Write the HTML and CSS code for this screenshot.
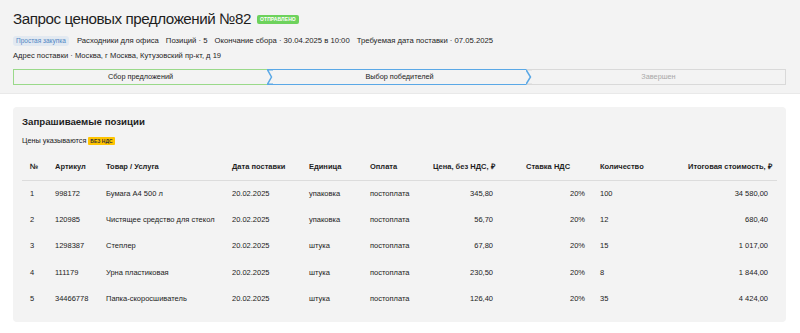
FILE: index.html
```html
<!DOCTYPE html>
<html lang="ru">
<head>
<meta charset="utf-8">
<title>Запрос ценовых предложений №82</title>
<link rel="stylesheet" href="styles.css">
</head>
<body>
<header class="head">
  <div class="title-row">
    <h1 class="title">Запрос ценовых предложений №82</h1>
    <span class="status">ОТПРАВЛЕНО</span>
  </div>
  <div class="meta-row">
    <span class="tag">Простая закупка</span>
    <span class="meta">Расходники для офиса</span>
    <span class="meta">Позиций · 5</span>
    <span class="meta">Окончание сбора · 30.04.2025 в 10:00</span>
    <span class="meta">Требуемая дата поставки · 07.05.2025</span>
  </div>
  <div class="addr-row">Адрес поставки · Москва, г Москва, Кутузовский пр-кт, д 19</div>
  <div class="stepper">
    <div class="step step-done">Сбор предложений</div>
    <svg class="chev" width="6" height="16" viewBox="0 0 6 16"><path d="M0 0.75H6M0 15.25H6M0.5 0.75L4.5 8L0.5 15.25" fill="none" stroke="#5aa8e6" stroke-width="1.5"/></svg>
    <div class="step step-active">Выбор победителей</div>
    <svg class="chev" width="6" height="16" viewBox="0 0 6 16"><path d="M0 0.75H6M0 15.25H6" fill="none" stroke="#d9d9d9" stroke-width="1.5"/><path d="M0 0.75L4.5 8L0 15.25" fill="none" stroke="#5aa8e6" stroke-width="1.5"/></svg>
    <div class="step step-todo">Завершен</div>
  </div>
</header>

<section class="card">
  <h2 class="card-title">Запрашиваемые позиции</h2>
  <div class="note">Цены указываются <span class="vat">БЕЗ НДС</span></div>
  <table class="items">
    <colgroup>
      <col class="c1"><col class="c2"><col class="c3"><col class="c4"><col class="c5">
      <col class="c6"><col class="c7"><col class="c8"><col class="c9"><col class="c10">
    </colgroup>
    <thead>
      <tr>
        <th class="num">№</th>
        <th>Артикул</th>
        <th>Товар / Услуга</th>
        <th>Дата поставки</th>
        <th>Единица</th>
        <th>Оплата</th>
        <th class="price">Цена, без НДС, ₽</th>
        <th class="rate">Ставка НДС</th>
        <th>Количество</th>
        <th class="total">Итоговая стоимость, ₽</th>
      </tr>
    </thead>
    <tbody>
      <tr><td class="num">1</td><td>998172</td><td>Бумага А4 500 л</td><td>20.02.2025</td><td>упаковка</td><td>постоплата</td><td class="price">345,80</td><td class="rate-v">20%</td><td>100</td><td class="total">34 580,00</td></tr>
      <tr><td class="num">2</td><td>120985</td><td>Чистящее средство для стекол</td><td>20.02.2025</td><td>упаковка</td><td>постоплата</td><td class="price">56,70</td><td class="rate-v">20%</td><td>12</td><td class="total">680,40</td></tr>
      <tr><td class="num">3</td><td>1298387</td><td>Степлер</td><td>20.02.2025</td><td>штука</td><td>постоплата</td><td class="price">67,80</td><td class="rate-v">20%</td><td>15</td><td class="total">1 017,00</td></tr>
      <tr><td class="num">4</td><td>111179</td><td>Урна пластиковая</td><td>20.02.2025</td><td>штука</td><td>постоплата</td><td class="price">230,50</td><td class="rate-v">20%</td><td>8</td><td class="total">1 844,00</td></tr>
      <tr><td class="num">5</td><td>34466778</td><td>Папка-скоросшиватель</td><td>20.02.2025</td><td>штука</td><td>постоплата</td><td class="price">126,40</td><td class="rate-v">20%</td><td>35</td><td class="total">4 424,00</td></tr>
    </tbody>
  </table>
</section>
</body>
</html>
```

FILE: styles.css
```css
* { box-sizing: border-box; }
html, body { margin: 0; padding: 0; background: #ffffff; }
body {
  font-family: "Liberation Sans", Arial, sans-serif;
  color: #222;
  width: 800px;
  height: 333px;
  overflow: hidden;
}

.head {
  background: #f3f3f3;
  padding: 7px 14px 8px 13px;
  border-bottom: 1px solid #e9e9e9;
  height: 94px;
}
.title-row { display: flex; align-items: center; gap: 6px; height: 24px; }
.title { margin: 0; font-size: 15.2px; letter-spacing: -0.45px; font-weight: normal; line-height: 24px; color: #1e1e1e; }
.status {
  background: #6dd25c;
  color: #fff;
  font-size: 5px;
  font-weight: bold;
  line-height: 9px;
  padding: 0 3px;
  border-radius: 2px;
  margin-top: 1px;
  letter-spacing: 0.1px;
}

.meta-row { display: flex; align-items: center; gap: 7px; margin-top: 4px; height: 11px; }
.tag {
  background: #e2e9f1;
  color: #4f86c4;
  font-size: 6.5px;
  line-height: 10px;
  padding: 0 3px;
  border-radius: 3px;
  margin-right: 1px;
}
.meta { font-size: 7.7px; line-height: 11px; color: #1e1e1e; }
.addr-row { font-size: 7.6px; line-height: 11px; margin-top: 4px; color: #1e1e1e; }

.stepper { display: flex; height: 16px; margin-top: 8px; width: 773px; }
.step {
  flex: 1 1 0;
  font-size: 7.3px;
  line-height: 13px;
  text-align: center;
  border-top: 1.5px solid;
  border-bottom: 1.5px solid;
}
.chev { flex: 0 0 6px; display: block; }
.step-done { border-left: 1.5px solid #9ad98a; border-color: #9ad98a; color: #222; }
.step-active { border-color: #5aa8e6; color: #222; }
.step-todo { border-color: #d9d9d9; border-right: 1.5px solid #d9d9d9; color: #a8a8a8; }

.card {
  background: #f3f3f3;
  margin: 13px 14px 0 13px;
  border-radius: 4px;
  padding: 8px 9px 10px 9px;
}
.card-title { margin: 0; font-size: 9.7px; font-weight: bold; line-height: 14px; color: #1e1e1e; }
.note { font-size: 7.3px; line-height: 10px; margin-top: 7px; color: #222; display: flex; align-items: center; gap: 2px; }
.vat {
  background: #ffc400;
  color: #333;
  font-size: 5px;
  font-weight: bold;
  line-height: 8px;
  padding: 0 2px;
  border-radius: 1px;
}

.items {
  width: 755px;
  table-layout: fixed;
  border-collapse: collapse;
  margin-top: 7px;
  font-size: 7.5px;
}
.c1 { width: 33px; } .c2 { width: 51px; } .c3 { width: 126px; } .c4 { width: 77px; }
.c5 { width: 61px; } .c6 { width: 63px; } .c7 { width: 93px; } .c8 { width: 74px; }
.c9 { width: 88px; } .c10 { width: 89px; }

.items th {
  font-weight: bold;
  text-align: left;
  height: 27px;
  padding: 0;
  color: #1e1e1e;
  border-bottom: 1px solid #dcdcdc;
  white-space: nowrap;
}
.items td {
  height: 26.4px;
  padding: 0;
  color: #222;
  white-space: nowrap;
}
.items .num { padding-left: 8px; }
.items .price { text-align: right; padding-right: 33px; }
.items .rate-v { text-align: right; padding-right: 15px; }
.items .total { text-align: right; padding-right: 9px; }
```
